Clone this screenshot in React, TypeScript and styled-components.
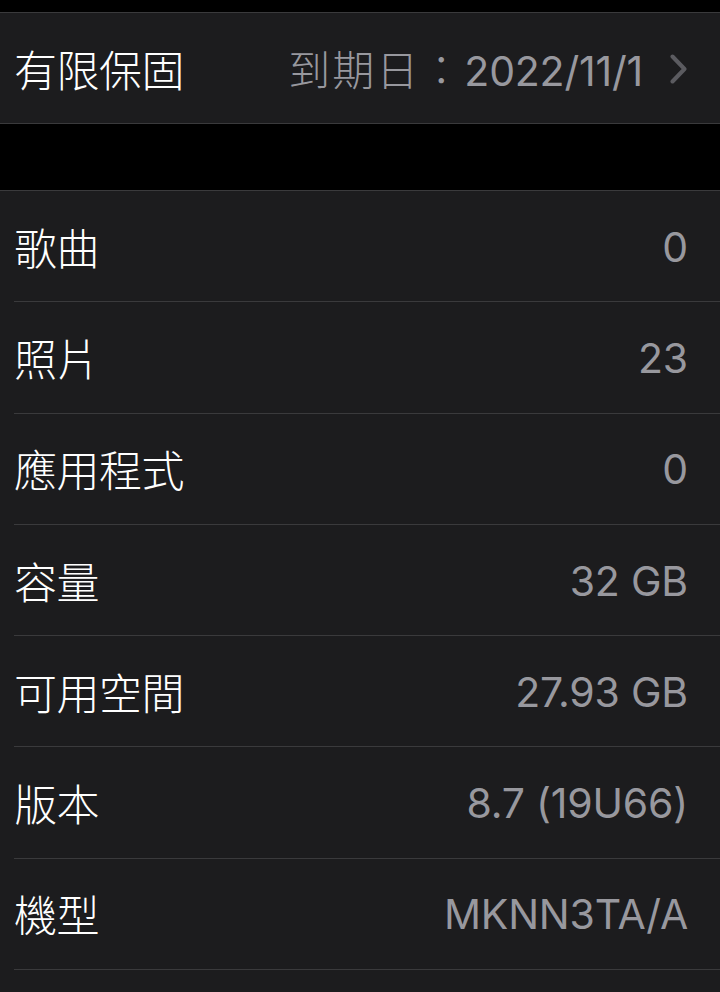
import React from 'react'
import styled, { createGlobalStyle } from 'styled-components'

const GlobalStyle = createGlobalStyle`
  html, body {
    margin: 0;
    padding: 0;
    background: #000;
  }
  body {
    font-family: 'Noto Sans CJK TC', 'Noto Sans', sans-serif;
    -webkit-font-smoothing: antialiased;
  }
`

type Item = { label: string; value: string }

const items: Item[] = [
  { label: '歌曲', value: '0' },
  { label: '照片', value: '23' },
  { label: '應用程式', value: '0' },
  { label: '容量', value: '32 GB' },
  { label: '可用空間', value: '27.93 GB' },
  { label: '版本', value: '8.7 (19U66)' },
  { label: '機型', value: 'MKNN3TA/A' },
  { label: '', value: '' },
]

const App = () => {
  return (
    <Screen>
      <GlobalStyle />
      <Section $gap={12}>
        <Row $height={110} $padRight={33} $last>
          <Label>有限保固</Label>
          <Value>
            <Cjk>到期日：</Cjk>2022/11/1
          </Value>
          <Chevron viewBox='0 0 17 30'>
            <path d='M2.5 2.5 L14.5 15 L2.5 27.5' />
          </Chevron>
        </Row>
      </Section>
      <Section $gap={66}>
        {items.map((item, i) => (
          <Row key={i} $height={111.3} $last={i === items.length - 1}>
            <Label>{item.label}</Label>
            <Value>{item.value}</Value>
          </Row>
        ))}
      </Section>
    </Screen>
  )
}

const Screen = styled.div`
  width: 720px;
  height: 992px;
  overflow: hidden;
  background: #000;
`

const Section = styled.section<{ $gap: number }>`
  margin-top: ${p => p.$gap}px;
  background: #1c1c1e;
  border-top: 1px solid #3a3a3c;
  border-bottom: 1px solid #3a3a3c;
`

const Row = styled.div<{ $height: number; $padRight?: number; $last?: boolean }>`
  box-sizing: border-box;
  height: ${p => p.$height}px;
  margin-left: 14px;
  padding-right: ${p => p.$padRight ?? 32}px;
  display: flex;
  align-items: center;
  border-bottom: ${p => (p.$last ? 'none' : '1px solid #3a3a3c')};
`

const Label = styled.span`
  flex: 1;
  color: #fff;
  font-family: 'Noto Sans CJK TC', 'Noto Sans CJK SC', sans-serif;
  font-weight: 300;
  font-size: 43px;
  letter-spacing: -0.5px;
  line-height: 1;
`

const Value = styled.span`
  color: #98989e;
  font-family: Inter, 'Noto Sans CJK TC', sans-serif;
  font-size: 41px;
  letter-spacing: -0.2px;
  line-height: 1;
  padding-top: 2px;
`

const Cjk = styled.span`
  font-family: 'Noto Sans CJK TC', sans-serif;
  font-weight: 300;
  font-size: 42px;
  letter-spacing: 2px;
`

const Chevron = styled.svg`
  flex: none;
  width: 17px;
  height: 30px;
  margin-left: 27px;
  margin-top: 2px;
  fill: none;
  stroke: #5b5b60;
  stroke-width: 4;
  stroke-linecap: round;
  stroke-linejoin: round;
`

export default App
